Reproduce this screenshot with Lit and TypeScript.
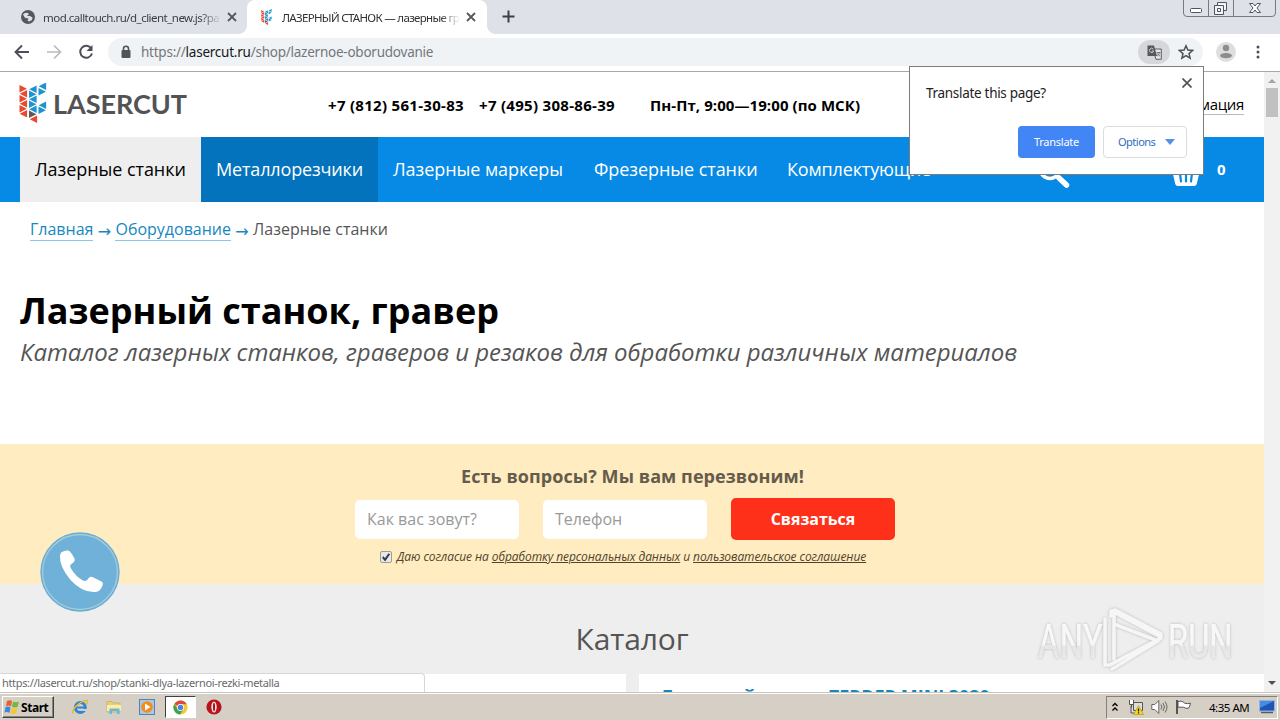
import { LitElement, html, css, svg } from "lit";
import { customElement } from "lit/decorators.js";

const RED = "#e8492f", BLUE = "#1f93cf", GREY = "#5a5a5c";

// [x, centre y, direction, colour] of every triangle in the logo mark
const MARK: [number, number, "r" | "l", string][] = [
  [0.5, 6.5, "r", RED], [0.5, 11.5, "l", RED], [0.5, 16.5, "r", RED], [0.5, 21.5, "l", RED], [0.5, 26.5, "r", RED], [0.5, 31.5, "l", RED],
  [10, 7, "l", BLUE], [10, 12, "r", BLUE], [10, 17, "l", BLUE], [10, 22, "r", BLUE], [10, 27, "l", BLUE],
  [10, 32, "r", GREY], [10.5, 37, "l", RED],
  [19.5, 4, "l", BLUE], [19.5, 9.5, "r", BLUE], [19.5, 23, "l", BLUE], [19.5, 28, "r", BLUE],
];
const mark = () => MARK.map(([x, y, d, c]) => svg`<path fill=${c} d=${d === "r" ? `M${x} ${y - 3.8}l7.4 3.800-7.400 3.800z` : `M${x + 7.6} ${y - 3.8}l-7.400 3.800 7.400 3.800z`}/>`);

const cross = html`<svg width="10" height="10" viewBox="0 0 10 10" stroke="#55585c" stroke-width="1.8"><path d="M1 1l8 8M9 1L1 9"/></svg>`;

@customElement("browser-bar")
class BrowserBar extends LitElement {
  static styles = css`
    :host { display: block; font-family: "Noto Sans", "Open Sans", sans-serif; }
    .tabs { height: 34px; background: #dee1e8; display: flex; align-items: flex-start; }
    .tab { height: 34px; display: flex; align-items: center; box-sizing: border-box; font-size: 11.5px; color: #3c4043; white-space: nowrap; }
    .one { width: 247px; padding: 0 10px 0 21px; }
    .two { width: 240px; padding: 0 11px 0 13px; background: #fff; border-radius: 8px 8px 0 0; position: relative; }
    .two::before, .two::after { content: ""; position: absolute; bottom: 0; width: 8px; height: 8px; }
    .two::before { left: -8px; background: radial-gradient(circle at 0 0, #dee1e8 7.5px, #fff 8px); }
    .two::after { right: -8px; background: radial-gradient(circle at 100% 0, #dee1e8 7.5px, #fff 8px); }
    .title { flex: 1; margin: 0 4px 0 8px; overflow: hidden; -webkit-mask-image: linear-gradient(90deg, #000 88%, transparent 99%); }
    .one .title { letter-spacing: -0.52px; }
    .two .title { letter-spacing: -0.68px; color: #303236; margin-left: 9px; }
    .plus { margin: 10px 0 0 15px; }
    .win { margin-left: auto; margin-right: 4px; }
    .tools { height: 38px; box-sizing: border-box; border-bottom: 1px solid #a9a9a9; background: #fff; display: flex; align-items: center; padding: 0 15px 1px 14px; }
    .nav { display: flex; width: 94px; gap: 16px; }
    .omni { flex: 1; height: 28px; border-radius: 14px; background: #f0f3f5; display: flex; align-items: center; padding: 0 9px 0 12px; }
    .url { flex: 1; margin-left: 9px; font-size: 13.5px; letter-spacing: -0.24px; color: #73777c; }
    .url b { font-weight: 400; color: #17181a; }
    .pill { width: 32px; height: 24px; border-radius: 12px; background: #d5d7da; display: grid; place-items: center; margin-right: 8px; }
    .avatar { margin: 0 15px 0 13px; }
    svg { display: block; flex: none; }
  `;
  render() {
    return html`
      <div class="tabs">
        <div class="tab one">
          <svg width="14" height="14" viewBox="0 0 14 14"><circle cx="7" cy="7" r="7" fill="#55595f"/><path fill="#dee1e8" d="M2 4.500Q4 2 6.500 3l1.500 1-2 2h3l2.500 1.500-.5 2.500-3 1.500-1.500-1 1-2-3-.5L3.500 7z"/></svg>
          <span class="title">mod.calltouch.ru/d_client_new.js?pa</span>${cross}
        </div>
        <div class="tab two">
          <svg width="13" height="16" viewBox="0 0 28 41">${mark()}</svg>
          <span class="title">ЛАЗЕРНЫЙ СТАНОК — лазерные гр</span>${cross}
        </div>
        <svg class="plus" width="13" height="13" viewBox="0 0 13 13" stroke="#3c4043" stroke-width="2"><path d="M6.500 .5v12M.5 6.500h12"/></svg>
        <svg class="win" width="93" height="17" viewBox="0 0 93 17" fill="none" stroke="#767a84">
          <path d="M.5 0v13q0 3.500 3.500 3.500h85q3.500 0 3.500-3.500V0M25.500 0v16M50.500 0v16"/>
          <g stroke="#50545e"><rect x="7.500" y="8.500" width="11" height="4" rx="1" fill="#fff"/>
          <path fill="#f4f4f6" d="M34.500 2.500h9v8h-9z"/><path fill="#f4f4f6" d="M31.500 5.500h9v9h-9z"/><path d="M34.500 8.500h3v3h-3z"/>
          <path fill="#fff" d="M66.500 3.500h3.500l2 2.500 2-2.500h3.500L74 8l3.500 4.500H74L72 10l-2 2.500h-3.500L70 8z"/></g>
        </svg>
      </div>
      <div class="tools">
        <div class="nav">
          <svg width="16" height="16" viewBox="0 0 16 16" fill="none" stroke="#4c5056" stroke-width="1.9"><path d="M15 8H2M8 1.500L1.500 8 8 14.500"/></svg>
          <svg width="16" height="16" viewBox="0 0 16 16" fill="none" stroke="#b9bbbe" stroke-width="1.700"><path d="M1 8h13M8 1.500L14.500 8 8 14.500"/></svg>
          <svg width="16" height="16" viewBox="0 0 16 16" fill="none" stroke="#4c5056" stroke-width="2"><path d="M13.300 4.500A6 6 0 1 0 14 9.500"/><path d="M14.500 1v6h-6z" fill="#4c5056" stroke="none"/></svg>
        </div>
        <div class="omni">
          <svg width="12" height="14" viewBox="0 0 12 14"><path d="M3.500 6V3.700a2.500 2.500 0 0 1 5 0V6" fill="none" stroke="#505459" stroke-width="1.600"/><rect x="1.500" y="5" width="9" height="8" rx="1" fill="#505459"/></svg>
          <span class="url">https://<b>lasercut.ru</b>/shop/lazernoe-oborudovanie</span>
          <span class="pill"><svg width="15" height="15" viewBox="0 0 15 15"><path d="M6 4h8.300v10.300H9z" fill="#e4e5e7" stroke="#5b5f64"/><path d="M.5.5h6.500l3 10.500H.5z" fill="#55595e"/><path d="M6.300 4.200a2.100 2.100 0 1 0 .3 1.800H4.800" fill="none" stroke="#d5d7da" stroke-width=".9"/><path d="M9.500 7.500h4M12.500 7.500c-.4 2-1.300 2.800-2.300 3.500M10.500 8.500c.5 1.200 1.500 2.200 2.600 2.700" fill="none" stroke="#5b5f64" stroke-width=".8"/></svg></span>
          <svg width="16" height="16" viewBox="0 0 16 16" fill="none" stroke="#4c5056" stroke-width="1.500"><path d="M8 1.800l1.900 4.300 4.700.4-3.600 3.100 1.100 4.600L8 11.700l-4.100 2.500L5 9.600 1.400 6.500l4.700-.4z"/></svg>
        </div>
        <svg class="avatar" width="20" height="20" viewBox="0 0 20 20"><circle cx="10" cy="10" r="10" fill="#dedede"/><circle cx="10" cy="6" r="3.200" fill="#8d8d8d"/><path d="M4 14c0-4 12-4 12 0-2 3-10 3-12 0z" fill="#8d8d8d"/></svg>
        <svg width="14" height="14" viewBox="0 0 14 14" fill="#4c5056"><circle cx="7" cy="2" r="1.500"/><circle cx="7" cy="7" r="1.500"/><circle cx="7" cy="12" r="1.500"/></svg>
      </div>`;
  }
}

@customElement("shop-page")
class ShopPage extends LitElement {
  static styles = css`
    :host { display: block; overflow: hidden; background: #fff; font-family: "Open Sans", sans-serif; color: #555; white-space: nowrap; }
    a { color: inherit; }
    .head { height: 65px; box-sizing: border-box; display: flex; align-items: center; padding: 0 20px 0 19px; color: #000; font-size: 15px; }
    .logo { width: 309px; height: 44px; display: flex; gap: 6px; color: #535355; font: 700 27px/42px Lato, sans-serif; letter-spacing: -0.05px; }
    .logo svg { display: block; }
    .tel { width: 136px; margin-right: 15px; font-weight: 700; letter-spacing: 0.3px; }
    .hours { margin-left: 20px; font-weight: 700; letter-spacing: 0.08px; }
    .info { margin-left: auto; border-bottom: 1px solid #bbb; line-height: 20px; letter-spacing: -0.34px; }
    .menu { height: 65px; background: #078ae6; color: #fff; display: flex; font-size: 18px; line-height: 65px; padding-left: 20px; letter-spacing: -0.06px; }
    .item { box-sizing: border-box; padding-left: 15px; }
    .w1 { width: 181px; background: #eee; color: #000; }
    .w2 { width: 177px; background: #0473bd; letter-spacing: -0.15px; }
    .w3 { width: 201px; }
    .w4 { width: 193px; }
    .w5 { width: 265px; letter-spacing: -0.15px; }
    .lens { margin-top: 16px; width: 34px; height: 36px; }
    .cart { margin: 22px 13px 0 97px; width: 36px; height: 28px; }
    .count { font-weight: 700; font-size: 15px; }
    .crumbs { height: 54px; box-sizing: border-box; padding: 17px 30px 0; display: flex; align-items: flex-start; font-size: 16px; line-height: 21px; }
    .crumbs a { color: #1787c0; text-decoration: none; border-bottom: 1px solid #8cc5e6; }
    .crumbs i { width: 22px; height: 24px; display: grid; place-items: center; font: 16px/24px "Open Sans", "DejaVu Sans", sans-serif; color: #1787c0; }
    h1 { margin: 30px 0 0 20px; font-size: 36px; line-height: 50px; color: #000; }
    .sub { height: 108px; margin-left: 20px; font-style: italic; font-size: 24px; line-height: 32px; letter-spacing: -0.045px; }
    .ask { height: 140px; background: #ffecc1; box-sizing: border-box; padding: 19px 14px 0 0; display: flex; flex-direction: column; align-items: center; }
    .q { font-size: 18px; font-weight: 700; line-height: 26px; color: #655b4b; letter-spacing: 0.07px; margin-left: 15px; }
    .row { display: grid; grid-template-columns: repeat(3, 164px); gap: 24px; margin-top: 9px; height: 42px; align-items: center; font-size: 16px; }
    .field { height: 39px; line-height: 38px; box-sizing: border-box; padding-left: 12px; background: #fff; border-radius: 5px; color: #999; }
    .btn { height: 42px; line-height: 42px; background: #ff3019; border-radius: 5px; color: #fff; font-weight: 700; text-align: center; }
    .agree { display: flex; align-items: center; margin-top: 8px; margin-right: 4px; height: 18px; font-style: italic; font-size: 12px; line-height: 18px; color: #51432c; letter-spacing: -0.08px; }
    .agree svg { margin-right: 5px; }
    .gap { margin: 0 3px; }
    .first { margin-right: 3px; }
    .catalog { height: 109px; background: #eee; display: flex; flex-direction: column; overflow: hidden; }
    h2 { margin: 0; height: 90px; text-align: center; font-weight: 400; font-size: 30px; line-height: 109px; letter-spacing: -0.13px; color: #555; }
    .cards { display: grid; grid-template-columns: 626px 1fr; gap: 13px; }
    .card { height: 80px; background: #fff; }
    .name { padding: 10px 21px; font-size: 18px; line-height: 25px; font-weight: 700; color: #1787b8; letter-spacing: -0.07px; }
  `;
  render() {
    return html`
      <div class="head">
        <div class="logo"><svg width="28" height="44" viewBox="0 0 28 44"><g transform="translate(0 -.8)">${mark()}</g></svg><span>LASERCUT</span></div>
        <span class="tel">+7 (812) 561-30-83</span><span class="tel">+7 (495) 308-86-39</span>
        <span class="hours">Пн-Пт, 9:00—19:00 (по МСК)</span>
        <span class="info">Информация</span>
      </div>
      <div class="menu">
        <span class="item w1">Лазерные станки</span><span class="item w2">Металлорезчики</span><span class="item w3">Лазерные маркеры</span><span class="item w4">Фрезерные станки</span><span class="item w5">Комплектующие</span>
        <svg class="lens" viewBox="0 0 34 36" fill="none" stroke="#fff"><circle cx="13" cy="15.500" r="10" stroke-width="3.500"/><path d="M22 25l7.500 7" stroke-width="5.500" stroke-linecap="round"/></svg>
        <svg class="cart" viewBox="0 0 36 28"><path fill="#fff" d="M2 7h31v4h-1l-3 13q-.5 3-3 3H10q-2.500 0-3-3L4 11H2z"/><path d="M12 14l1 8.500M18 14v8.500M24 14l-1 8.500" stroke="#078ae6" stroke-width="2.200" stroke-linecap="round"/></svg>
        <span class="count">0</span>
      </div>
      <div class="crumbs"><a>Главная</a><i>→</i><a>Оборудование</a><i>→</i><span>Лазерные станки</span></div>
      <h1>Лазерный станок, гравер</h1>
      <div class="sub">Каталог лазерных станков, граверов и резаков для обработки различных материалов</div>
      <div class="ask">
        <div class="q">Есть вопросы? Мы вам перезвоним!</div>
        <div class="row"><div class="field">Как вас зовут?</div><div class="field">Телефон</div><div class="btn">Связаться</div></div>
        <div class="agree">
          <svg width="12" height="12" viewBox="0 0 12 12"><rect x=".5" y=".5" width="11" height="11" rx="1.500" fill="#e9e9e9" stroke="#a09c94"/><path d="M2.800 6l2.300 2.800L9.300 2.800" fill="none" stroke="#2d3a52" stroke-width="2"/></svg>
          <span class="first">Даю согласие на</span><u>обработку персональных данных</u><span class="gap">и</span><u>пользовательское соглашение</u>
        </div>
      </div>
      <div class="catalog">
        <h2>Каталог</h2>
        <div class="cards"><div class="card"></div><div class="card"><div class="name">Лазерный станок ZERDER MINI 3020</div></div></div>
      </div>`;
  }
}

@customElement("task-bar")
class TaskBar extends LitElement {
  static styles = css`
    :host { display: flex; align-items: center; height: 28px; box-sizing: border-box; background: #d5cfc6; border-top: 1px solid #c8c4bb; box-shadow: inset 0 1px #fff; padding: 1px 2px 0; font-family: "Noto Sans", sans-serif; color: #000; }
    .start { width: 52px; height: 22px; box-sizing: border-box; display: flex; align-items: center; gap: 1px; padding-left: 1px; border: 1px solid; border-color: #fff #404040 #404040 #fff; box-shadow: inset -1px -1px #8a867f; font: 700 12px "Noto Sans", sans-serif; letter-spacing: -0.45px; }
    .quick { display: flex; align-items: center; margin-left: 18px; }
    .q { width: 16px; height: 16px; margin-right: 18px; }
    .q3 { margin-right: 17px; margin-left: -1px; }
    .on { width: 31px; height: 22px; box-sizing: border-box; display: grid; place-items: center; background: #fff; border: 1px solid; border-color: #404040 #fff #fff #404040; margin: 0 10px 0 -7px; }
    .tray { margin-left: auto; width: 172px; height: 23px; box-sizing: border-box; display: flex; align-items: center; border: 1px solid; border-color: #85817a #fff #fff #85817a; padding-left: 5px; }
    .time { margin: 0 10px 0 17px; font-size: 11.500px; letter-spacing: -0.48px; white-space: nowrap; }
    svg { display: block; flex: none; }
    .n { margin-left: 10px; }
    .s { margin-left: 7px; }
  `;
  render() {
    return html`
      <div class="start">
        <svg width="16" height="16" viewBox="0 0 16 16"><path fill="#e8602c" d="M3 2q3-1.500 5 0L7 7.500Q5 6 2 7z"/><path fill="#78b63c" d="M9 2.500q3 1.500 6 0L13.500 8Q11 9 8 7.800z"/><path fill="#3d8ad8" d="M1.500 8q3-1 5 .5L5.500 14Q3.500 12.500.5 13.500z"/><path fill="#f7c52d" d="M7.800 9q3 1.200 5.500.2L12 14.500q-3 1-5.500-.3z"/></svg>Start
      </div>
      <div class="quick">
        <svg class="q" viewBox="0 0 16 16"><circle cx="8.300" cy="8.500" r="5" fill="none" stroke="#2c86d3" stroke-width="3"/><path d="M4 8.500h9" stroke="#2c86d3" stroke-width="2"/><path d="M10 10h5v2h-5z" fill="#d5cfc6"/><path d="M1 14.500C-1 10 10 1 15 1.500c1 1 0 3-1 4" fill="none" stroke="#e9b931" stroke-width="1.400"/></svg>
        <svg class="q" viewBox="0 0 16 16"><path fill="#ecd071" stroke="#c2a346" stroke-width=".6" d="M1 2.500h5l1 1.500h7v9H1z"/><path fill="#fbeea9" d="M1 6h14v6H1z"/><path d="M3.500 15V9.500h10V15h-2.500v-3H6v3z" fill="#6cb6df"/></svg>
        <svg class="q q3" viewBox="0 0 16 16"><rect x=".5" y=".5" width="15" height="15" fill="#a7c9e6" stroke="#5283b4"/><circle cx="8" cy="8" r="5.800" fill="#f38b1d"/><path fill="#fff" d="M6 4.500l5.500 3.500L6 11.500z"/></svg>
        <div class="on"><svg width="15" height="15" viewBox="0 0 16 16"><circle cx="8" cy="8" r="7.500" fill="#f7c92e"/><path d="M8 8L1.500 4.200A7.500 7.500 0 0 1 14.600 4.400L8 4.500z" fill="#df4937"/><path d="M1.500 4.200A7.500 7.500 0 0 0 7.500 15.500L11 10 5 9.700z" fill="#3fa353"/><circle cx="8" cy="8" r="3.700" fill="#fff"/><circle cx="8" cy="8" r="2.900" fill="#4684e8"/></svg></div>
        <svg width="16" height="16" viewBox="0 0 16 16"><circle cx="8" cy="8" r="7.600" fill="#b5141b"/><ellipse cx="8" cy="8" rx="2.700" ry="5.500" fill="#f6dede"/><ellipse cx="8" cy="8" rx="1" ry="4.200" fill="#a00f16"/></svg>
      </div>
      <div class="tray">
        <svg width="6" height="10" viewBox="0 0 6 10" fill="none" stroke="#000" stroke-width="1.300"><path d="M.5 4L3 1.500 5.500 4M.5 8.500L3 6l2.500 2.500"/></svg>
        <svg class="n" width="16" height="16" viewBox="0 0 16 16"><path d="M5.500 3.500h9v8h-9zM3 7v7h5" fill="#ddd" stroke="#555"/><path d="M1.500 1v4.500h4V1M3.500 5.500v3" fill="#fff" stroke="#555"/><path d="M10.500 6.500l5 9h-10z" fill="#f8d720" stroke="#a98e0c" stroke-width=".6"/><path d="M10.500 9.500v3M10.500 13.300v1.200" stroke="#222" stroke-width="1.300"/></svg>
        <svg class="s" width="17" height="16" viewBox="0 0 17 16" fill="none" stroke="#666"><path d="M.8 5.500h3l4-4v13l-4-4h-3z" fill="#fff"/><path d="M10 5.500q1.800 2.500 0 5M12 4q3 4 0 8M14 2.500q4 5.500 0 11"/></svg>
        <svg class="s" width="17" height="16" viewBox="0 0 17 16"><path d="M3 2.500q3-1 5.500.5l1 1.200q3 .8 6 0-.5 3-2 5-3 .6-5-1H3z" fill="#fff" stroke="#555"/><path d="M2 1v14" stroke="#555" stroke-width="2"/></svg>
        <span class="time">4:35 AM</span>
        <svg width="16" height="14" viewBox="0 0 16 14"><rect x=".5" y=".5" width="15" height="10.500" fill="#1c55b4" stroke="#8fb4e2"/><path d="M1 1h14L1 8z" fill="#4a8be0"/><path d="M2 12.500h12" stroke="#555c68" stroke-width="1.500"/></svg>
      </div>`;
  }
}

@customElement("app-root")
class AppRoot extends LitElement {
  static styles = css`
    :host { display: block; position: relative; width: 1280px; height: 720px; overflow: hidden; background: #fff; }
    .frame { display: flex; flex-direction: column; height: 720px; }
    .view { height: 620px; display: flex; }
    shop-page { width: 1264px; }
    .scroll { width: 16px; background: #f1f1f1; display: flex; flex-direction: column; align-items: center; }
    .arrow { width: 8px; height: 4px; display: block; }
    .up { margin: 7px 0 5px; }
    .thumb { width: 12px; height: 29px; background: #c1c1c1; }
    .down { margin: auto 0 7px; }
    .status { position: absolute; left: 0; top: 673px; width: 424px; height: 18px; border: 1px solid #d6d6d6; border-left: 0; border-bottom: 0; border-radius: 0 4px 0 0; background: #fff; font: 11px/18px "Noto Sans", sans-serif; letter-spacing: -0.335px; color: #6a6a6a; text-indent: 2px; }
    .call { position: absolute; left: 40px; top: 532px; }
    .mark { position: absolute; left: 1030px; top: 602px; font-family: Roboto, sans-serif; }
    .pop { position: absolute; left: 909px; top: 66px; width: 295px; height: 109px; box-sizing: border-box; background: #fff; border: 1px solid #7c7c7c; padding: 11px 16px 16px; display: flex; flex-direction: column; justify-content: space-between; font-family: "Noto Sans", sans-serif; color: #222; }
    .top { display: flex; justify-content: space-between; font-size: 13.500px; line-height: 30px; letter-spacing: -0.3px; margin-right: -5px; }
    .acts { display: flex; justify-content: flex-end; gap: 8px; font-size: 11px; line-height: 32px; }
    .go { width: 77px; border-radius: 4px; background: #4285f4; color: #fff; text-align: center; letter-spacing: -0.25px; }
    .opt { width: 84px; height: 32px; line-height: 30px; box-sizing: border-box; border: 1px solid #dadce0; border-radius: 4px; color: #2f6cc0; display: flex; align-items: center; justify-content: space-between; padding: 0 11px 0 14px; letter-spacing: -0.5px; }
    svg { display: block; }
  `;
  render() {
    return html`
      <div class="frame">
        <browser-bar></browser-bar>
        <div class="view">
          <shop-page></shop-page>
          <div class="scroll">
            <svg class="arrow up" viewBox="0 0 8 4"><path d="M0 4l4-4 4 4z" fill="#a3a3a3"/></svg>
            <div class="thumb"></div>
            <svg class="arrow down" viewBox="0 0 8 4"><path d="M0 0l4 4 4-4z" fill="#505050"/></svg>
          </div>
        </div>
        <task-bar></task-bar>
      </div>
      <div class="status">https://lasercut.ru/shop/stanki-dlya-lazernoi-rezki-metalla</div>
      <svg class="call" width="80" height="80" viewBox="0 0 80 80"><circle cx="40" cy="40" r="39.700" fill="#69add9"/><circle cx="40" cy="40" r="37.500" fill="#6fb1d9" stroke="#a5cbd8" stroke-width="1.300"/><path fill="#fff" d="M21 20.500q4-2.500 7.500-2 2 .5 6 8 1 3-2.500 5-3 1.500-1 5 5 8.500 12 12 3 1.500 5-1.500 1.500-3 4.500-2l9 4.500q2 1 1 4-2 6-7 6.500-13 1-25-12Q19 34 20 23.500z"/></svg>
      <svg class="mark" width="210" height="76" viewBox="0 0 210 76">
        <defs>
          <linearGradient id="fade" x1="0" y1="0" x2="0" y2="1"><stop offset="0" stop-color="#fff" stop-opacity=".85"/><stop offset=".56" stop-color="#fff" stop-opacity=".75"/><stop offset=".58" stop-color="#e8e8e8" stop-opacity=".85"/><stop offset="1" stop-color="#f2f2f2" stop-opacity=".85"/></linearGradient>
          <filter id="soft" x="-20%" y="-20%" width="140%" height="140%"><feDropShadow dx="0" dy="0" stdDeviation="1.500" flood-color="#000" flood-opacity=".3"/></filter>
        </defs>
        <g filter="url(#soft)" fill="url(#fade)">
          <text transform="translate(8 56) scale(.68 1)" font-size="48" textLength="95">ANY</text>
          <text transform="translate(138 56) scale(.68 1)" font-size="48" textLength="95">RUN</text>
          <path fill="none" stroke="#f9f9f9" stroke-opacity=".9" stroke-width="3.200" stroke-linejoin="round" stroke-linecap="round" d="M84 57V10l47 25M75 17v46h5l51-27M81 14V9l4-1 46 24v4M84 22l44 17-46 28"/>
        </g>
      </svg>
      <div class="pop">
        <div class="top"><span>Translate this page?</span><svg width="10" height="10" viewBox="0 0 10 10" stroke="#505357" stroke-width="1.700"><path d="M.5.500l9 9M9.500.500l-9 9"/></svg></div>
        <div class="acts"><span class="go">Translate</span><span class="opt">Options<svg width="10" height="6" viewBox="0 0 10 6"><path d="M0 0h10L5 6z" fill="#5291ea"/></svg></span></div>
      </div>`;
  }
}
